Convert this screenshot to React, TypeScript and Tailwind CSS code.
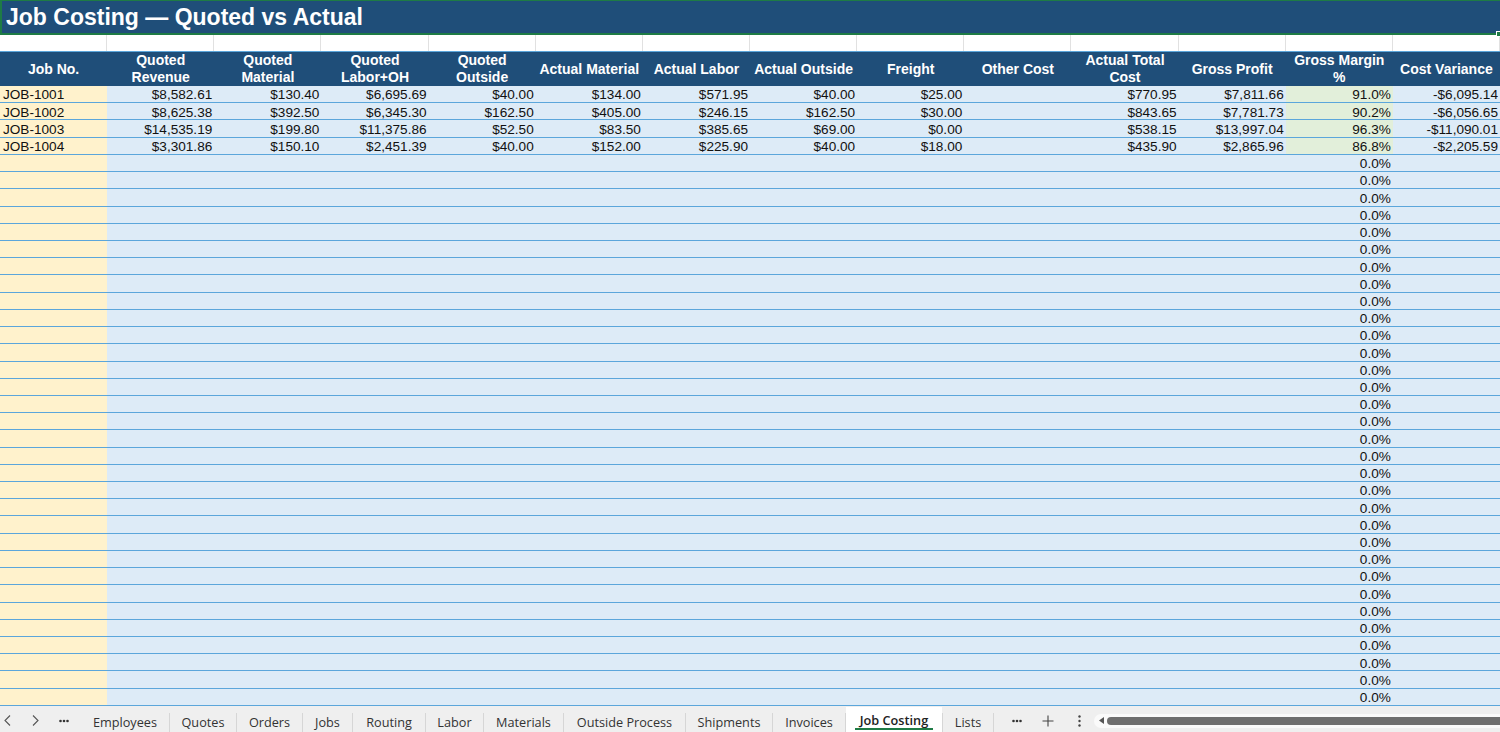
import React from "react";

const headers: React.ReactNode[] = [
  "Job No.",
  <>Quoted<br />Revenue</>,
  <>Quoted<br />Material</>,
  <>Quoted<br />Labor+OH</>,
  <>Quoted<br />Outside</>,
  "Actual Material",
  "Actual Labor",
  "Actual Outside",
  "Freight",
  "Other Cost",
  <>Actual Total<br />Cost</>,
  "Gross Profit",
  <>Gross Margin<br />%</>,
  "Cost Variance",
];

const data: string[][] = [
  ["JOB-1001", "$8,582.61", "$130.40", "$6,695.69", "$40.00", "$134.00", "$571.95", "$40.00", "$25.00", "", "$770.95", "$7,811.66", "91.0%", "-$6,095.14"],
  ["JOB-1002", "$8,625.38", "$392.50", "$6,345.30", "$162.50", "$405.00", "$246.15", "$162.50", "$30.00", "", "$843.65", "$7,781.73", "90.2%", "-$6,056.65"],
  ["JOB-1003", "$14,535.19", "$199.80", "$11,375.86", "$52.50", "$83.50", "$385.65", "$69.00", "$0.00", "", "$538.15", "$13,997.04", "96.3%", "-$11,090.01"],
  ["JOB-1004", "$3,301.86", "$150.10", "$2,451.39", "$40.00", "$152.00", "$225.90", "$40.00", "$18.00", "", "$435.90", "$2,865.96", "86.8%", "-$2,205.59"],
];

const rows: string[][] = [
  ...data,
  ...Array.from({ length: 32 }, () => {
    const r = Array(14).fill("");
    r[12] = "0.0%";
    return r;
  }),
];

const tabs: { name: string; w: string; active?: boolean }[] = [
  { name: "Employees", w: "w-[88px]" },
  { name: "Quotes", w: "w-[66px]" },
  { name: "Orders", w: "w-[65px]" },
  { name: "Jobs", w: "w-[49px]" },
  { name: "Routing", w: "w-[72px]" },
  { name: "Labor", w: "w-[57px]" },
  { name: "Materials", w: "w-[79px]" },
  { name: "Outside Process", w: "w-[121px]" },
  { name: "Shipments", w: "w-[86px]" },
  { name: "Invoices", w: "w-[72px]" },
  { name: "Job Costing", w: "w-[96px]", active: true },
  { name: "Lists", w: "w-[50px]" },
];

const grid = "grid grid-cols-[repeat(14,minmax(0,1fr))]";

function Dots() {
  return (
    <svg width="10" height="4" viewBox="0 0 10 4">
      <circle cx="1.5" cy="2" r="1.3" fill="#333" />
      <circle cx="5" cy="2" r="1.3" fill="#333" />
      <circle cx="8.5" cy="2" r="1.3" fill="#333" />
    </svg>
  );
}

export default function App() {
  return (
    <div className="w-[1500px] h-[732px] overflow-hidden flex flex-col bg-white font-['Liberation_Sans',Arial,sans-serif] text-[#111]">
      {/* Title */}
      <div className="relative h-[35px] shrink-0 bg-[#1F4E79] border-l-2 border-b-2 border-t border-[#1E7B45] flex items-center pl-[4px]">
        <span className="text-white font-bold text-[23px] leading-none">Job Costing — Quoted vs Actual</span>
        <div className="absolute right-[-2px] bottom-[-4px] w-[6px] h-[6px] bg-[#1E7B45] border border-white" />
      </div>

      {/* Empty row 2 */}
      <div className={`${grid} h-[16px] shrink-0 bg-white`}>
        {Array.from({ length: 14 }).map((_, i) => (
          <div key={i} className="border-r border-[#e1e1e1]" />
        ))}
      </div>

      {/* Header */}
      <div className={`${grid} h-[35px] shrink-0 bg-[#1F4E79] border-t border-[#5BA6DB]`}>
        {headers.map((h, i) => (
          <div key={i} className="flex items-center justify-center text-center text-white font-bold text-[14px] leading-[17px]">
            <span>{h}</span>
          </div>
        ))}
      </div>

      {/* Data rows */}
      <div className="flex flex-col shrink-0">
        {rows.map((r, ri) => (
          <div key={ri} className={`${grid} h-[17.22px] border-b border-[#5BA6DB]`}>
            {r.map((v, ci) => {
              let bg = "bg-[#DDEBF7]";
              if (ci === 0) bg = "bg-[#FFF2CC]";
              else if (ci === 12 && ri < 4) bg = "bg-[#E2EFDA]";
              return (
                <div
                  key={ci}
                  className={`${bg} flex items-center pt-[2px] text-[13.6px] leading-none whitespace-nowrap ${
                    ci === 0 ? "justify-start pl-[3px]" : "justify-end pr-[2px]"
                  }`}
                >
                  {v}
                </div>
              );
            })}
          </div>
        ))}
      </div>

      {/* Sheet tabs */}
      <div className="flex-1 bg-[#EFEFEF] flex items-stretch font-['Open_Sans','Noto_Sans',sans-serif] text-[12.7px] text-[#333]">
        <div className="flex items-center w-[14px] justify-center pt-[4px]">
          <svg width="7" height="11" viewBox="0 0 7 11">
            <polyline points="6,0.5 1,5.5 6,10.5" fill="none" stroke="#555" strokeWidth="1.1" />
          </svg>
        </div>
        <div className="flex items-center w-[14px] ml-[14px] justify-center pt-[4px]">
          <svg width="7" height="11" viewBox="0 0 7 11">
            <polyline points="1,0.5 6,5.5 1,10.5" fill="none" stroke="#555" strokeWidth="1.1" />
          </svg>
        </div>
        <div className="flex items-center w-[14px] ml-[15px] justify-center pt-[4px]">
          <Dots />
        </div>
        <div className="w-[10px]" />
        {tabs.map((t) => (
          <React.Fragment key={t.name}>
            <div
              className={`${t.w} flex items-center justify-center relative ${
                t.active ? "bg-white text-[#222] font-semibold mt-[1px]" : ""
              }`}
            >
              <span className={t.active ? "pt-[3px]" : "pt-[7px]"}>{t.name}</span>
              {t.active && (
                <div className="absolute left-[9px] right-[9px] bottom-[2px] h-[2px] bg-[#1E7B45]" />
              )}
            </div>
            <div className="w-px bg-[#d6d6d6] self-end h-[19px]" />
          </React.Fragment>
        ))}
        <div className="flex items-center justify-center w-[20px] ml-[13px] pt-[4px]">
          <Dots />
        </div>
        <div className="flex items-center justify-center w-[20px] ml-[11px] pt-[4px]">
          <svg width="12" height="12" viewBox="0 0 12 12">
            <path d="M6 0.5V11.5M0.5 6H11.5" stroke="#444" strokeWidth="1.1" />
          </svg>
        </div>
        <div className="flex items-center justify-center w-[10px] ml-[16px] pt-[4px]">
          <svg width="3" height="12" viewBox="0 0 3 12">
            <circle cx="1.5" cy="1.5" r="1.2" fill="#444" />
            <circle cx="1.5" cy="6" r="1.2" fill="#444" />
            <circle cx="1.5" cy="10.5" r="1.2" fill="#444" />
          </svg>
        </div>
        <div className="flex-1 ml-[10px] flex items-center pt-[4px]">
          <div className="h-[14px] w-full bg-[#FAFAFA] rounded-l-full flex items-center pl-[5px]">
            <svg width="5" height="7" viewBox="0 0 5 7">
              <polygon points="5,0 0,3.5 5,7" fill="#555" />
            </svg>
            <div className="ml-[3px] flex-1 h-[8px] bg-[#6E6E6E] rounded-l-full" />
          </div>
        </div>
      </div>
    </div>
  );
}
